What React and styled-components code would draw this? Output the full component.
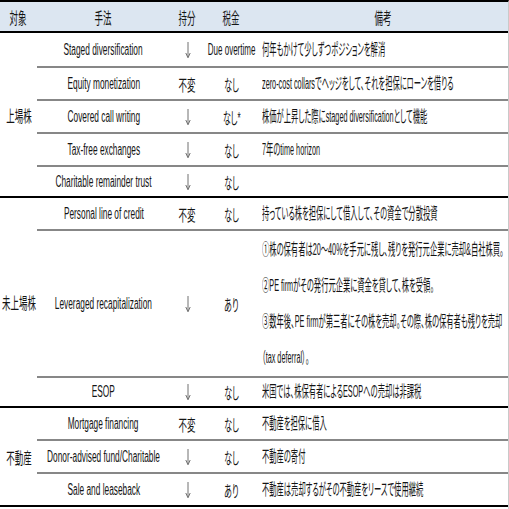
import React from "react";
import styled, { createGlobalStyle } from "styled-components";

const GlobalStyle = createGlobalStyle`
  html, body {
    margin: 0;
    padding: 0;
    background: #ffffff;
    overflow: hidden;
  }
  body {
    font-family: "Liberation Sans", "Noto Sans CJK JP", sans-serif;
    font-feature-settings: "palt";
    color: #141414;
  }
`;

const groups = [
  {
    label: "上場株",
    rows: [
      { method: "Staged diversification", share: "down", tax: "Due overtime", notes: ["何年もかけて少しずつポジションを解消"], h: 33 },
      { method: "Equity monetization", share: "不変", tax: "なし", notes: ["zero-cost collarsでヘッジをして、それを担保にローンを借りる"], h: 33 },
      { method: "Covered call writing", share: "down", tax: "なし*", notes: ["株価が上昇した際にstaged diversificationとして機能"], h: 33 },
      { method: "Tax-free exchanges", share: "down", tax: "なし", notes: ["7年のtime horizon"], h: 33 },
      { method: "Charitable remainder trust", share: "down", tax: "なし", notes: [], h: 31 },
    ],
  },
  {
    label: "未上場株",
    rows: [
      { method: "Personal line of credit", share: "不変", tax: "なし", notes: ["持っている株を担保にして借入して、その資金で分散投資"], h: 31 },
      {
        method: "Leveraged recapitalization",
        share: "down",
        tax: "あり",
        notes: [
          "①株の保有者は20～40%を手元に残し、残りを発行元企業に売却&自社株買。",
          "②PE firmがその発行元企業に資金を貸して、株を受領。",
          "③数年後、PE firmが第三者にその株を売却。その際、株の保有者も残りを売却",
          "（tax deferral）。",
        ],
        h: 147,
      },
      { method: "ESOP", share: "down", tax: "なし", notes: ["米国では、株保有者によるESOPへの売却は非課税"], h: 30 },
    ],
  },
  {
    label: "不動産",
    rows: [
      { method: "Mortgage financing", share: "不変", tax: "なし", notes: ["不動産を担保に借入"], h: 31 },
      { method: "Donor-advised fund/Charitable", share: "down", tax: "なし", notes: ["不動産の寄付"], h: 33 },
      { method: "Sale and leaseback", share: "down", tax: "あり", notes: ["不動産は売却するがその不動産をリースで使用継続"], h: 33 },
    ],
  },
];

// thin downward arrow used in the 持分 column
const DownArrow = () => (
  <svg width="8" height="18" viewBox="0 0 8 18" fill="none">
    <path d="M4 1 V16" stroke="#707070" strokeWidth="1" />
    <path d="M1.8 12 L4 16.8 L6.2 12" stroke="#707070" strokeWidth="1" strokeLinejoin="round" />
  </svg>
);

export default function App() {
  return (
    <>
      <GlobalStyle />
      <Sheet>
        <HeaderRow>
          <HeadCell><Narrow>対象</Narrow></HeadCell>
          <HeadCell><Narrow>手法</Narrow></HeadCell>
          <HeadCell><Narrow>持分</Narrow></HeadCell>
          <HeadCell><Narrow>税金</Narrow></HeadCell>
          <HeadCell><Narrow>備考</Narrow></HeadCell>
        </HeaderRow>
        {groups.map((g) => (
          <Group key={g.label}>
            <GroupLabel><Narrow>{g.label}</Narrow></GroupLabel>
            <Rows>
              {g.rows.map((r, i) => (
                <Row key={r.method} $first={i === 0} $height={r.h}>
                  <Cell><Narrow $scale={0.52}>{r.method}</Narrow></Cell>
                  <Cell>
                    {r.share === "down" ? <DownArrow /> : <Narrow>{r.share}</Narrow>}
                  </Cell>
                  <Cell><Narrow $scale={0.5}>{r.tax}</Narrow></Cell>
                  <NoteCell>
                    {r.notes.map((n) => (
                      <NoteLine key={n} $multi={r.notes.length > 1}>
                        <Narrow $scale={0.455} $left>{n}</Narrow>
                      </NoteLine>
                    ))}
                  </NoteCell>
                </Row>
              ))}
            </Rows>
          </Group>
        ))}
      </Sheet>
    </>
  );
}

const Sheet = styled.div`
  // box model
  width: 509px;
  height: 509px;
  box-sizing: border-box;
  border-top: 2px solid #000;
  border-right: 1px solid #c9c9c9;
  overflow: hidden;

  // flexbox
  display: flex;
  flex-direction: column;
`;

const HeaderRow = styled.div`
  // grid
  display: grid;
  grid-template-columns: 37px 133px 35px 53px 1fr;

  // box model
  height: 31px;
  flex-shrink: 0;
  box-sizing: border-box;
  border-bottom: 2px solid #000;
  background: #dce6f1;
`;

const HeadCell = styled.div`
  display: flex;
  align-items: center;
  justify-content: center;
  font-size: 16px;
`;

const Narrow = styled.span`
  display: inline-block;
  white-space: nowrap;
  transform: scaleX(${(p) => p.$scale || 0.53});
  transform-origin: ${(p) => (p.$left ? "left center" : "center center")};
`;

const Group = styled.div`
  // grid
  display: grid;
  grid-template-columns: 37px 1fr;
  flex-shrink: 0;

  // box model
  border-bottom: 2px solid #000;
`;

const GroupLabel = styled.div`
  display: flex;
  align-items: center;
  justify-content: center;
  font-size: 16px;
`;

const Rows = styled.div`
  display: flex;
  flex-direction: column;
  min-width: 0;
`;

const Row = styled.div`
  // grid
  display: grid;
  grid-template-columns: 133px 35px 53px minmax(0, 1fr);

  // box model
  height: ${(p) => p.$height}px;
  box-sizing: border-box;
  border-top: ${(p) => (p.$first ? "none" : "2px solid #878787")};
`;

const Cell = styled.div`
  display: flex;
  align-items: center;
  justify-content: center;
  font-size: 16px;
`;

const NoteCell = styled.div`
  display: flex;
  flex-direction: column;
  justify-content: center;
  min-width: 0;
  overflow: hidden;
  padding-left: 4px;
  font-size: 16px;
`;

const NoteLine = styled.div`
  line-height: ${(p) => (p.$multi ? "36px" : "20px")};
`;
